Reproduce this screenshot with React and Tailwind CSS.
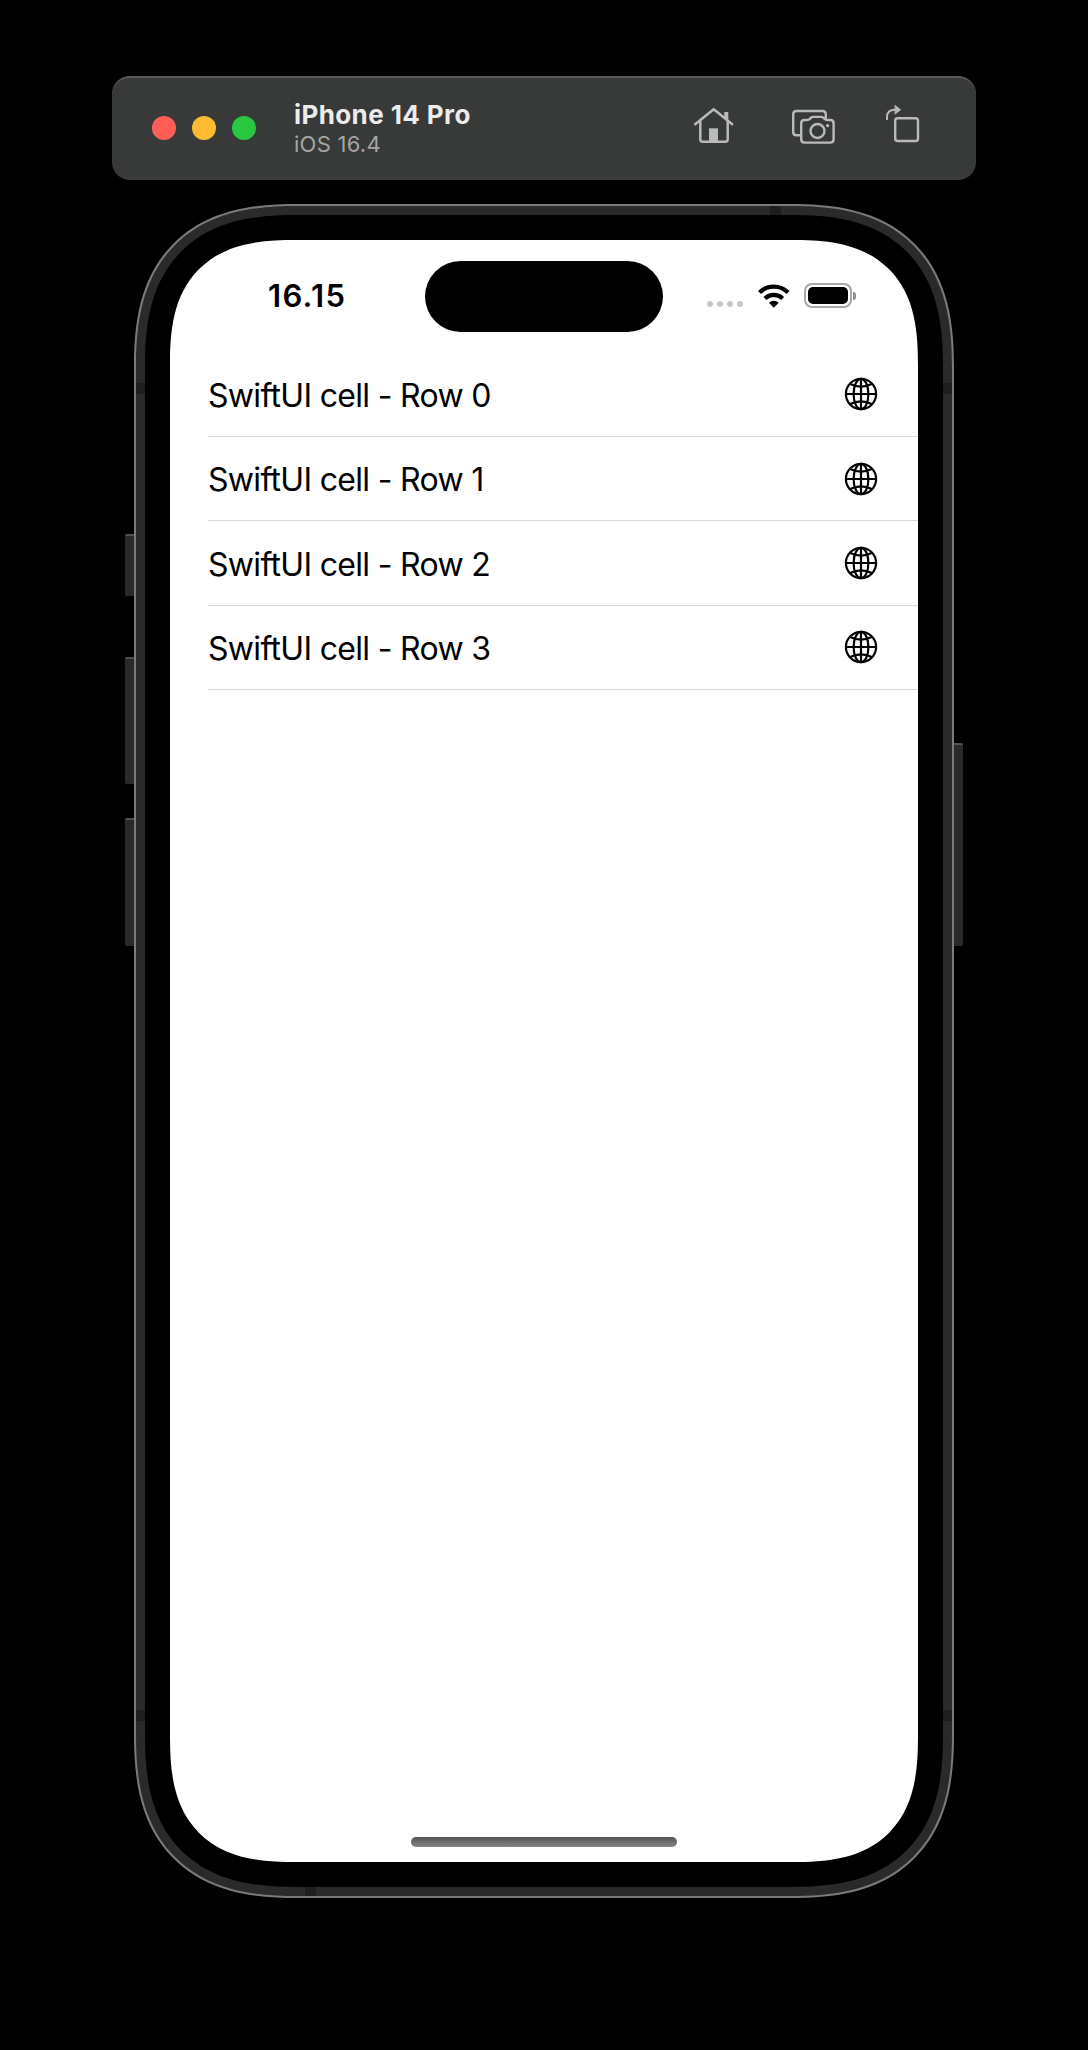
import React from "react";

const rows = ["SwiftUI cell - Row 0", "SwiftUI cell - Row 1", "SwiftUI cell - Row 2", "SwiftUI cell - Row 3"];

function HomeIcon() {
  return (
    <svg className="h-[40px] w-[44px]" viewBox="692 106 44 40" fill="none" stroke="#b9baba" strokeWidth="2.5" strokeLinecap="round" strokeLinejoin="round">
      <path d="M695.2 124.2 L713.7 109.3 L732.2 124.2" />
      <path d="M700.3 121.5 V139.3 Q700.3 141.8 702.8 141.8 H725.2 Q727.7 141.8 727.7 139.3 V121.5" />
      <path d="M724.2 112 H728.3 V121 L724.2 117.6 Z" fill="#b9baba" stroke="none" />
      <path d="M709 128.3 H718 V142 H709 Z" fill="#b9baba" stroke="none" />
    </svg>
  );
}

function CameraIcon() {
  return (
    <svg className="h-[40px] w-[48px]" viewBox="789 106 48 40" fill="none" stroke="#b9baba" strokeWidth="2.4" strokeLinecap="round" strokeLinejoin="round">
      <path d="M800 135.3 H796.5 Q793.2 135.3 793.2 132 V114.3 Q793.2 111 796.5 111 H822.5 Q825.8 111 825.8 114.3 V118" />
      <path d="M804.5 120 H807.3 Q808.8 120 809.6 119 L810.8 117.9 Q811.8 116.9 813.4 116.9 H821 Q822.6 116.9 823.6 117.9 L824.8 119 Q825.6 120 827.1 120 H830.3 Q833.6 120 833.6 123.3 V139.3 Q833.6 142.6 830.3 142.6 H804.5 Q801.2 142.6 801.2 139.3 V123.3 Q801.2 120 804.5 120 Z" />
      <circle cx="817.5" cy="131" r="7" />
      <circle cx="827.6" cy="125.6" r="1.7" fill="#b9baba" stroke="none" />
    </svg>
  );
}

function RotateIcon() {
  return (
    <svg className="h-[44px] w-[40px]" viewBox="883 102 40 44" fill="none" stroke="#b9baba" strokeWidth="2.4" strokeLinecap="round" strokeLinejoin="round">
      <rect x="895.2" y="118.2" width="22.8" height="22.8" rx="2.6" />
      <path d="M887 119.3 V117.5 Q887 109.8 894.5 109.8 H896" strokeWidth="2" />
      <path d="M895.3 105.7 L900.6 109.8 L895.3 113.8 Z" fill="#b9baba" strokeWidth="1" />
    </svg>
  );
}

function WifiIcon() {
  return (
    <svg className="h-[24px] w-[32px]" viewBox="0 0 32 24" fill="none" stroke="#000" strokeWidth="4.2">
      <path d="M1.5 8.6 A20.3 20.3 0 0 1 30.1 8.6" />
      <path d="M7 14.4 A12.7 12.7 0 0 1 24.6 14.4" />
      <path d="M15.8 23.7 L10.9 18.7 A7 7 0 0 1 20.7 18.7 Z" fill="#000" stroke="none" />
    </svg>
  );
}

function GlobeIcon() {
  return (
    <svg className="h-[34px] w-[34px]" viewBox="-17 -17 34 34" fill="none" stroke="#000" strokeWidth="2.2">
      <circle r="15.1" />
      <ellipse rx="7.4" ry="15.1" />
      <path d="M0 -15 V15 M-15 0 H15" />
      <path d="M-11.4 -10.2 Q0 -4.6 11.4 -10.2 M-11.4 10.2 Q0 4.6 11.4 10.2" />
    </svg>
  );
}

function SideButton({ className }) {
  return <div className={"absolute w-[10px] border-t-2 border-[#505050] bg-[#2a2a2a] " + className} />;
}

function Band({ className }) {
  return <div className={"absolute bg-[#1e1e1e] " + className} />;
}

export default function App() {
  return (
    <div className="flex h-[2050px] w-[1088px] flex-col items-center overflow-hidden bg-black pt-[76px] font-['Inter',sans-serif]">
      <header className="flex h-[104px] w-[864px] shrink-0 items-center rounded-[18px] border-t-2 border-[#575858] bg-[#383939] pl-10">
        <div className="flex gap-4 pb-[2px]">
          <span className="size-6 rounded-full bg-[#ff5f57]" />
          <span className="size-6 rounded-full bg-[#febc2e]" />
          <span className="size-6 rounded-full bg-[#28c840]" />
        </div>
        <div className="ml-[38px] flex w-[342px] flex-col">
          <span className="text-[26px] leading-[30px] font-bold tracking-[0.4px] text-[#ececec]">iPhone 14 Pro</span>
          <span className="text-[22px] leading-[28px] tracking-[0.25px] text-[#a5a5a5]">iOS 16.4</span>
        </div>
        <div className="ml-auto flex items-center pr-[53px] pb-[6px]">
          <HomeIcon />
          <span className="ml-[53px] flex"><CameraIcon /></span>
          <span className="-mt-[4px] ml-[46px] flex"><RotateIcon /></span>
        </div>
      </header>

      <div className="relative mt-6 h-[1694px] w-[820px] shrink-0">
        <SideButton className="top-[330px] -left-[9px] h-[62px] rounded-l-[2px]" />
        <SideButton className="top-[453px] -left-[9px] h-[127px] rounded-l-[2px]" />
        <SideButton className="top-[614px] -left-[9px] h-[128px] rounded-l-[2px]" />
        <SideButton className="top-[539px] -right-[9px] h-[203px] rounded-r-[2px]" />

        <div className="relative h-full w-full overflow-hidden rounded-[134px] bg-[#7a7a7a] p-[2px] supports-[corner-shape:squircle]:rounded-[164px] supports-[corner-shape:squircle]:[corner-shape:superellipse(1.33)]">
          <div className="relative h-full w-full overflow-hidden rounded-[132px] bg-[#2a2a2a] p-[9px] supports-[corner-shape:squircle]:rounded-[162px] supports-[corner-shape:squircle]:[corner-shape:superellipse(1.33)]">
            <Band className="top-0 left-[634px] h-[9px] w-[11px]" />
            <Band className="bottom-0 left-[169px] h-[9px] w-[11px]" />
            <Band className="top-[177px] left-0 h-[11px] w-[9px]" />
            <Band className="top-[177px] right-0 h-[11px] w-[9px]" />
            <Band className="top-[1504px] left-0 h-[11px] w-[9px]" />
            <Band className="top-[1504px] right-0 h-[11px] w-[9px]" />

            <div className="relative h-full w-full rounded-[123px] bg-black p-[25px] supports-[corner-shape:squircle]:rounded-[152px] supports-[corner-shape:squircle]:[corner-shape:superellipse(1.34)]">
              <main className="flex h-full w-full flex-col overflow-hidden rounded-[98px] bg-white supports-[corner-shape:squircle]:rounded-[126px] supports-[corner-shape:squircle]:[corner-shape:superellipse(1.4)]">
                <div className="flex h-[112.7px] shrink-0 items-start">
                  <span className="mt-[36px] w-[255px] pl-[98px] text-[31px] leading-[40px] font-semibold tracking-[1.3px] text-black">16.15</span>
                  <div className="mt-[21.3px] h-[70.4px] w-[238px] rounded-full bg-black" />
                  <div className="mt-[43px] ml-[44px] flex h-[25px] items-center">
                    <div className="mt-[17px] flex gap-1">
                      <span className="size-[6px] rounded-full bg-[#c9c9c9]" />
                      <span className="size-[6px] rounded-full bg-[#c9c9c9]" />
                      <span className="size-[6px] rounded-full bg-[#c9c9c9]" />
                      <span className="size-[6px] rounded-full bg-[#c9c9c9]" />
                    </div>
                    <span className="ml-[15px] flex"><WifiIcon /></span>
                    <div className="ml-[14px] h-[25px] w-[48px] rounded-[8px] border-2 border-[#a8a8a8] p-[2px]">
                      <div className="h-full w-full rounded-[5px] bg-black" />
                    </div>
                    <div className="ml-[1px] h-[8px] w-[3px] rounded-r-full bg-[#909090]" />
                  </div>
                </div>

                <ul>
                  {rows.map((label) => (
                    <li key={label} className="ml-[38px] flex h-[84.33px] items-center justify-between border-b border-[#d9d9d9] pr-[40px]">
                      <span className="mt-[3px] text-[32px] leading-[40px] tracking-[-0.68px] text-black">{label}</span>
                      <GlobeIcon />
                    </li>
                  ))}
                </ul>

                <div className="mx-auto mt-auto mb-[15px] h-[10px] w-[266px] rounded-full bg-linear-to-b from-[#555555] to-[#858585]" />
              </main>
            </div>
          </div>
        </div>
      </div>
    </div>
  );
}
